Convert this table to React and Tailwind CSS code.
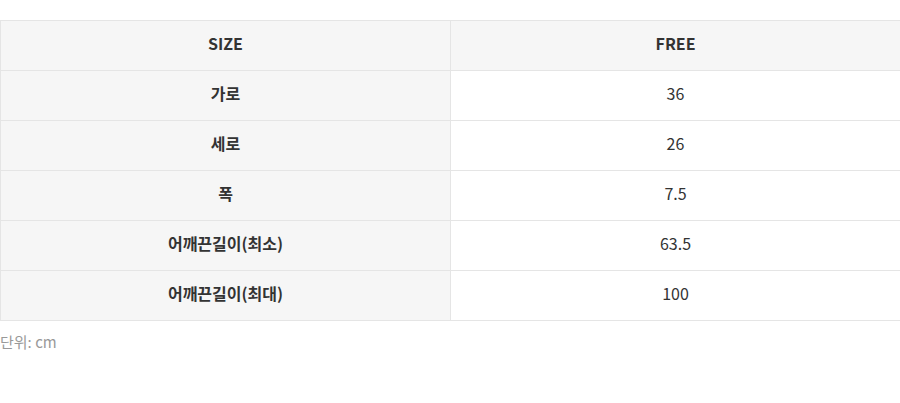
export default function App() {
  const rows = [
    ["가로", "36"],
    ["세로", "26"],
    ["폭", "7.5"],
    ["어깨끈길이(최소)", "63.5"],
    ["어깨끈길이(최대)", "100"],
  ];
  const font = { fontFamily: '"Noto Sans CJK KR", "Noto Sans", sans-serif' };
  const cell = "h-[50px] flex items-center justify-center pb-[5px] border-r border-b border-[#e5e5e5]";
  return (
    <div className="w-[900px] bg-white pt-[20px]" style={font}>
      <div className="grid grid-cols-[450px_450px] border-t border-l border-[#e5e5e5] text-[16px] leading-[20px] text-[#333]">
        <div className={cell + " bg-[#f6f6f6] font-bold"}>SIZE</div>
        <div className={cell + " bg-[#f6f6f6] font-bold"}>FREE</div>
        {rows.map(([k, v]) => (
          <>
            <div key={k + "k"} className={cell + " bg-[#f6f6f6] font-bold"}>{k}</div>
            <div key={k + "v"} className={cell + " bg-white"}>{v}</div>
          </>
        ))}
      </div>
      <div className="mt-[11px] text-[15px] leading-[20px] text-[#999]">단위: cm</div>
    </div>
  );
}
